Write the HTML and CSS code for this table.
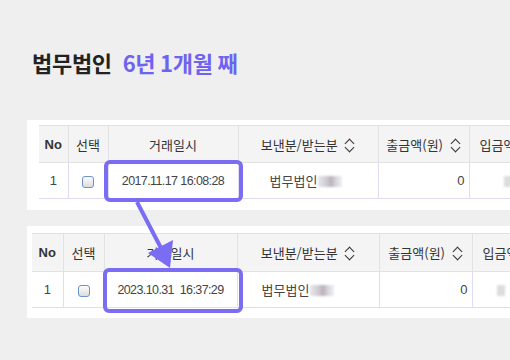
FILE: index.html
```html
<!DOCTYPE html>
<html lang="ko">
<head>
    <meta charset="UTF-8">
    <meta name="viewport" content="width=device-width, initial-scale=1.0">
    <title>거래내역</title>
    <link rel="stylesheet" href="styles.css">
</head>
<body>
    <h1 class="title">법무법인 <span class="years">6년 1개월 째</span></h1>

    <div class="panel panel-old">
        <table class="list">
            <colgroup>
                <col class="c-no"><col class="c-sel"><col class="c-date"><col class="c-name"><col class="c-out"><col class="c-in">
            </colgroup>
            <thead>
                <tr>
                    <th class="no">No</th>
                    <th>선택</th>
                    <th>거래일시</th>
                    <th>보낸분/받는분 <i class="sort"></i></th>
                    <th>출금액(원) <i class="sort"></i></th>
                    <th class="cut">입금액(원) <i class="sort"></i></th>
                </tr>
            </thead>
            <tbody>
                <tr>
                    <td>1</td>
                    <td><span class="chk"></span></td>
                    <td class="date">2017.11.17 16:08:28</td>
                    <td>법무법인<span class="mask"></span></td>
                    <td class="num">0</td>
                    <td class="cut"><span class="mask short"></span></td>
                </tr>
            </tbody>
        </table>
    </div>

    <div class="panel panel-new">
        <table class="list">
            <colgroup>
                <col class="c-no"><col class="c-sel"><col class="c-date"><col class="c-name"><col class="c-out"><col class="c-in">
            </colgroup>
            <thead>
                <tr>
                    <th class="no">No</th>
                    <th>선택</th>
                    <th>거래일시</th>
                    <th>보낸분/받는분 <i class="sort"></i></th>
                    <th>출금액(원) <i class="sort"></i></th>
                    <th class="cut">입금액(원) <i class="sort"></i></th>
                </tr>
            </thead>
            <tbody>
                <tr>
                    <td>1</td>
                    <td><span class="chk"></span></td>
                    <td class="date">2023.10.31&nbsp;&nbsp;16:37:29</td>
                    <td>법무법인<span class="mask"></span></td>
                    <td class="num">0</td>
                    <td class="cut"><span class="mask short"></span></td>
                </tr>
            </tbody>
        </table>
    </div>

    <!-- 강조 표시 (박스 + 화살표) -->
    <svg class="marks" width="510" height="360" viewBox="0 0 510 360">
        <rect x="106" y="162" width="135" height="38" rx="4"/>
        <rect x="105" y="270" width="136" height="41" rx="4"/>
        <line x1="137" y1="202" x2="161" y2="248"/>
        <polygon points="173,240 148,253 170,268"/>
    </svg>
</body>
</html>
```

FILE: styles.css
```css
*{
    margin:0;
    padding:0;
    box-sizing:border-box;
}
html,body{
    width:510px;
    height:360px;
    overflow:hidden;
}
body{
    position:relative;
    background:#efefef;
    font-family:"Noto Sans CJK KR","Liberation Sans",sans-serif;
    color:#333;
}
h1.title{
    padding:46px 0 0 32px;
    height:120px;
    font-size:22px;
    line-height:32px;
    font-weight:700;
    color:#222;
    letter-spacing:-0.3px;
    word-spacing:5px;
}
h1.title .years{
    color:#6e62f0;
    word-spacing:-1px;
}
.panel{
    background:#fff;
    margin-left:27px;
    width:560px;
    overflow:hidden;
}
.panel-old{
    height:90px;
    padding:5px 0 0 12px;
}
.panel-new{
    margin-top:16px;
    height:92px;
    padding:7px 0 0 5px;
}
table.list{
    border-collapse:collapse;
    table-layout:fixed;
    width:560px;
    font-size:13px;
    border-bottom:1px solid #ddd;
}
table.list tbody tr{
    border-bottom:1px solid #e0dcf6;
}
.panel-old col.c-no{ width:29px; }
.panel-old col.c-sel{ width:40px; }
.panel-old col.c-date{ width:130px; }
.panel-old col.c-name{ width:140px; }
.panel-old col.c-out{ width:91px; }
.panel-new col.c-no{ width:31px; }
.panel-new col.c-sel{ width:41px; }
.panel-new col.c-date{ width:133px; }
.panel-new col.c-name{ width:142px; }
.panel-new col.c-out{ width:93px; }
col.c-in{ width:140px; }

table.list th{
    height:37px;
    background:#f4f4f4;
    border-top:1px solid #e2e2e2;
    border-right:1px solid #e2e2e2;
    border-bottom:1px solid #e2e2e2;
    font-weight:400;
    color:#333;
    white-space:nowrap;
}
.panel-new table.list th{
    height:38px;
}
table.list th.no{
    font-family:"Liberation Sans",sans-serif;
    font-weight:700;
    font-size:13px;
}
table.list th.cut,table.list td.cut{
    text-align:left;
    padding-left:10px;
}
table.list td{
    height:36px;
    text-align:center;
    border-right:1px solid #e0dcf6;
    color:#444;
    white-space:nowrap;
}
table.list td.date{
    font-family:"Liberation Sans",sans-serif;
    font-size:12.5px;
    letter-spacing:-0.6px;
}
table.list td.num{
    text-align:right;
    padding-right:4px;
    font-family:"Liberation Sans",sans-serif;
}
table.list td:first-child{
    font-family:"Liberation Sans",sans-serif;
}
.panel-old table.list td:nth-child(4){
    padding-right:4px;
}
.panel-new table.list td:nth-child(4){
    padding-right:20px;
}
.panel-old table.list td.cut{
    padding-left:34px;
}
.panel-new table.list td.cut{
    padding-left:24px;
}

/* 정렬 아이콘 */
i.sort{
    display:inline-block;
    position:relative;
    width:11px;
    height:14px;
    margin-left:3px;
    vertical-align:-2px;
}
i.sort::before,i.sort::after{
    content:"";
    position:absolute;
    left:2px;
    width:6px;
    height:6px;
    border-left:1.6px solid #333;
    border-top:1.6px solid #333;
}
i.sort::before{
    top:2px;
    transform:rotate(45deg);
}
i.sort::after{
    top:6px;
    transform:rotate(225deg);
}

/* 체크박스 */
span.chk{
    display:inline-block;
    width:12px;
    height:12px;
    border:1px solid #6d93c9;
    border-radius:3px;
    background:linear-gradient(#fdfdfd,#dcdcdc);
    vertical-align:middle;
}

/* 모자이크 처리된 이름 */
span.mask{
    display:inline-block;
    width:24px;
    height:11px;
    margin-left:1px;
    vertical-align:-1px;
    background:linear-gradient(90deg,#e6e6ee 0,#d4d0d6 30%,#b9b3b8 55%,#d9d6dc 75%,#eef1f7 100%);
    filter:blur(1px);
}
span.mask.short{
    width:8px;
    margin-left:0;
    background:#dcdcdc;
}

svg.marks{
    position:absolute;
    top:0;
    left:0;
    pointer-events:none;
}
svg.marks rect{
    fill:none;
    stroke:#7a6cf3;
    stroke-width:4;
}
svg.marks line{
    stroke:#7a6cf3;
    stroke-width:4;
}
svg.marks polygon{
    fill:#7a6cf3;
}
```
